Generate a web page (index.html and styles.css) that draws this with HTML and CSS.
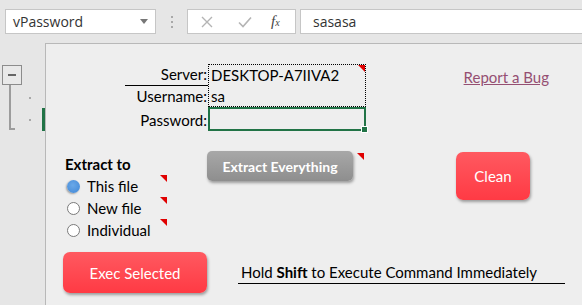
FILE: index.html
```html
<!DOCTYPE html>
<html lang="en">
<head>
    <meta charset="UTF-8">
    <meta name="viewport" content="width=device-width, initial-scale=1.0">
    <title>vPassword</title>
    <link rel="stylesheet" href="styles.css">
</head>
<body>
    <div class="formula-bar">
        <div class="name-box">vPassword<span class="drop"></span></div>
        <div class="grip"><i></i><i></i><i></i></div>
        <div class="fx-buttons">
            <svg width="12" height="12" viewBox="0 0 12 12"><path d="M1 1L11 11M11 1L1 11" stroke="#b4b4b4" stroke-width="1.4" fill="none"/></svg>
            <svg width="14" height="12" viewBox="0 0 14 12"><path d="M1 6.5L5 10.5L13 1.5" stroke="#b4b4b4" stroke-width="1.6" fill="none"/></svg>
            <span class="fx">f<span class="sub">x</span></span>
        </div>
        <div class="formula">sasasa</div>
    </div>
    <div class="workspace">
        <div class="outline">
            <!-- outline level bracket and selected row marker -->
            <svg width="45" height="262" viewBox="0 0 45 262">
                <rect x="2.5" y="22.5" width="19" height="19" fill="#e9e9e9" stroke="#8c8c8c"/>
                <rect x="8" y="31" width="8" height="2" fill="#666"/>
                <rect x="9" y="42" width="2" height="44" fill="#9c9c9c"/>
                <rect x="9" y="85" width="6" height="2" fill="#9c9c9c"/>
                <rect x="29" y="54" width="2" height="2" fill="#a8a8a8"/>
                <rect x="29" y="76" width="2" height="2" fill="#a8a8a8"/>
                <rect x="42" y="65" width="3" height="23" fill="#217346"/>
            </svg>
        </div>
        <div class="sheet">
            <div class="row-top">
                <div class="form">
                    <div class="label server r1">Server:</div>
                    <div class="value r1">DESKTOP-A7IIVA2</div>
                    <div class="label r2">Username:</div>
                    <div class="value r2">sa</div>
                    <div class="dotted"></div>
                    <div class="label r3">Password:</div>
                    <div class="value active r3"></div>
                </div>
                <a class="report" href="#">Report a Bug</a>
            </div>
            <div class="row-mid">
                <div class="extract-to">
                    <div class="cell heading">Extract to</div>
                    <div class="cell note"><span class="radio on"></span>This file</div>
                    <div class="cell note"><span class="radio"></span>New file</div>
                    <div class="cell note"><span class="radio"></span>Individual</div>
                </div>
                <div class="btn grey">Extract Everything</div>
                <div class="mark"></div>
                <div class="btn red clean">Clean</div>
            </div>
            <div class="row-bottom">
                <div class="btn red exec">Exec Selected</div>
                <div class="hint">Hold <b>Shift</b> to Execute Command Immediately</div>
            </div>
        </div>
    </div>
</body>
</html>
```

FILE: styles.css
```css
html {
    font-family: 'Lato', 'Liberation Sans', sans-serif;
}
body {
    margin: 0;
    background: #e6e6e6;
    color: #000;
}
.formula-bar {
    display: flex;
    align-items: center;
    height: 43px;
    padding-left: 5px;
    font-family: 'Open Sans', sans-serif;
    font-size: 14px;
    color: #333;
}
.name-box, .fx-buttons, .formula {
    box-sizing: border-box;
    height: 25px;
    background: #fff;
    border: 1px solid #c6c6c6;
    display: flex;
    align-items: center;
}
.name-box {
    width: 151px;
    padding: 0 7px;
    justify-content: space-between;
}
.drop {
    border-top: 5px solid #777;
    border-left: 4px solid transparent;
    border-right: 4px solid transparent;
}
.grip {
    width: 31px;
    display: flex;
    flex-direction: column;
    align-items: center;
    gap: 3px;
}
.grip i {
    width: 2px;
    height: 2px;
    background: #a8a8a8;
}
.fx-buttons {
    width: 109px;
    padding-left: 13px;
}
.fx-buttons svg:nth-child(2) {
    margin-left: 25px;
}
.fx {
    margin-left: 19px;
    font-family: 'Liberation Serif', serif;
    font-style: italic;
    font-size: 15px;
    color: #444;
}
.fx .sub {
    font-size: 10px;
}
.formula {
    flex: 1;
    margin-left: 4px;
    padding-left: 12px;
    border-right: none;
}
.workspace {
    display: flex;
    height: 262px;
}
.outline {
    width: 45px;
    flex: none;
}
.outline svg {
    display: block;
}
.sheet {
    flex: 1;
    background: #eeeeee;
    border-top: 1px solid #b8b8b8;
    border-left: 1px solid #b8b8b8;
    font-size: 15px;
}
.row-top {
    display: flex;
    align-items: flex-start;
    padding-top: 20px;
}
.form {
    margin-left: 79px;
    display: grid;
    grid-template-columns: 83px 158px;
    grid-template-rows: 22px 21px 24px;
}
.label, .value {
    display: flex;
    align-items: flex-end;
    padding-bottom: 2px;
    box-sizing: border-box;
    white-space: nowrap;
}
.label {
    grid-column: 1;
    justify-content: flex-end;
    padding-right: 1px;
}
.value {
    grid-column: 2;
    padding-left: 3px;
}
.r1 { grid-row: 1; }
.r2 { grid-row: 2; }
.r3 { grid-row: 3; }
.server {
    border-bottom: 1px solid #000;
}
.dotted {
    grid-row: 1 / 3;
    grid-column: 2;
    border: 1px dotted #000;
    position: relative;
}
.dotted::after, .note::after, .mark {
    content: '';
    border-top: 7px solid #e00000;
    border-left: 7px solid transparent;
}
.dotted::after {
    position: absolute;
    top: 0;
    right: 0;
}
.value.active {
    border: 2px solid #217346;
    position: relative;
}
.value.active::after {
    content: '';
    position: absolute;
    right: -4px;
    bottom: -4px;
    width: 5px;
    height: 5px;
    background: #217346;
    border: 1px solid #fff;
}
.report {
    margin-left: auto;
    margin-right: 33px;
    margin-top: 4px;
    color: #954f72;
    font-size: 15px;
}
.row-mid {
    display: flex;
    align-items: flex-start;
    margin-top: 20px;
}
.extract-to {
    margin-left: 17px;
    width: 104px;
    padding-top: 2px;
}
.cell {
    height: 22px;
    display: flex;
    align-items: center;
    position: relative;
}
.heading {
    font-weight: bold;
    padding-left: 2px;
}
.note::after {
    position: absolute;
    top: 0;
    right: 0;
}
.radio {
    box-sizing: border-box;
    width: 13px;
    height: 13px;
    border-radius: 50%;
    border: 1px solid #7a7a7a;
    background: #fff;
    margin: 0 7px 0 4px;
}
.radio.on {
    border: none;
    background: radial-gradient(circle at 45% 40%, #6aa8e8, #3f86d6);
    box-shadow: -1px 1px 2px rgba(0, 0, 0, .35);
}
.btn {
    display: flex;
    align-items: center;
    justify-content: center;
    color: #fff;
    box-shadow: 1px 2px 3px rgba(0, 0, 0, .35);
}
.grey {
    margin-left: 40px;
    width: 146px;
    height: 30px;
    border-radius: 5px;
    background: linear-gradient(#a8a8a8, #8e8e8e);
    font-weight: bold;
    font-size: 14px;
}
.mark {
    margin: 2px 0 0 4px;
}
.red {
    border-radius: 7px;
    background: linear-gradient(#ff5960, #ff3a44);
}
.clean {
    margin: 1px 0 0 92px;
    width: 74px;
    height: 48px;
}
.row-bottom {
    display: flex;
    align-items: flex-start;
    margin-top: 11px;
}
.exec {
    margin-left: 17px;
    width: 144px;
    height: 41px;
}
.hint {
    margin: 11px 0 0 31px;
    width: 324px;
    height: 20px;
    padding-left: 3px;
    border-bottom: 1px solid #000;
}
```
